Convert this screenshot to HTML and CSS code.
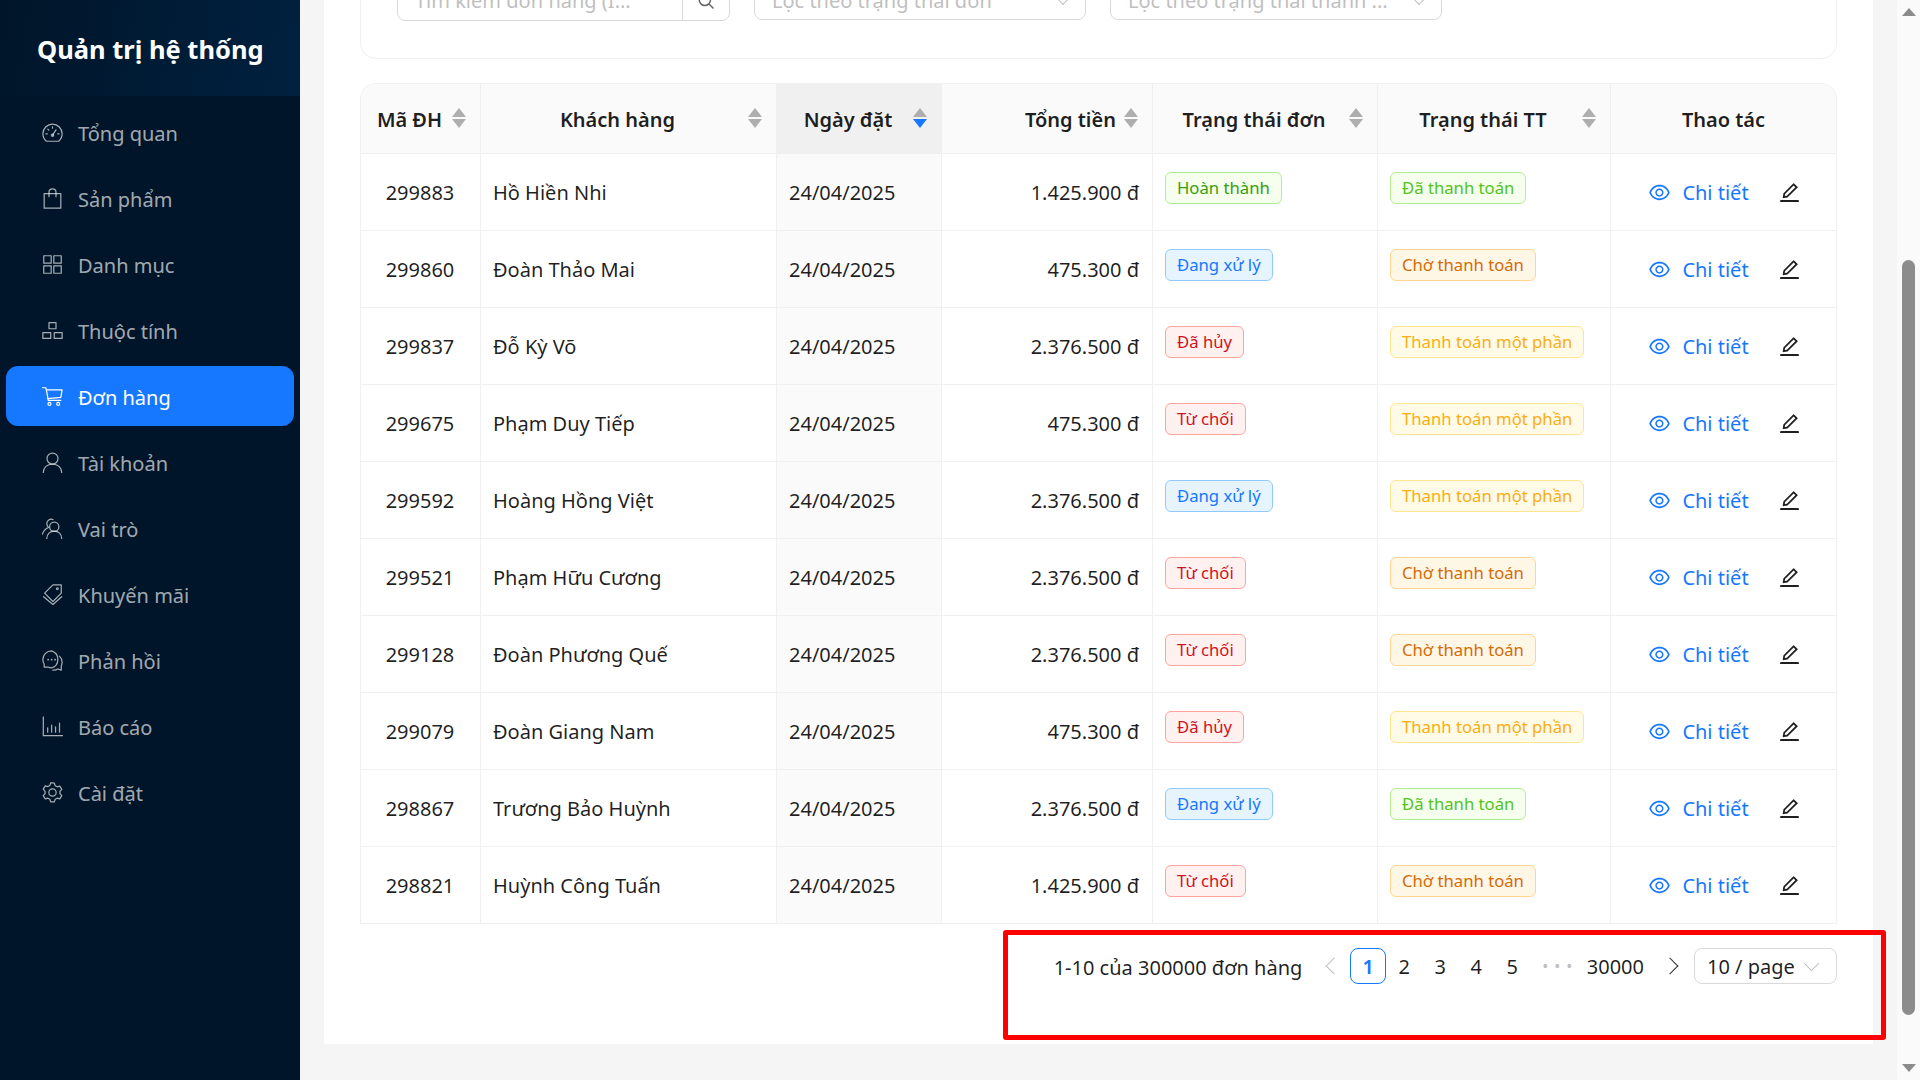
FILE: index.html
```html
<!DOCTYPE html>
<html lang="vi">
<head>
  <meta charset="UTF-8" />
  <title>Quản trị hệ thống - Đơn hàng</title>
  <link rel="stylesheet" href="styles.css">
</head>
<body>
  <svg class="sprite" xmlns="http://www.w3.org/2000/svg">
    <symbol id="i-eye" viewBox="64 64 896 896"><path fill="currentColor" d="M942.2 486.2C847.4 286.5 704.1 186 512 186c-192.2 0-335.4 100.5-430.2 300.3a60.3 60.3 0 0 0 0 51.5C176.6 737.5 319.9 838 512 838c192.2 0 335.4-100.5 430.2-300.3 7.7-16.2 7.7-35 0-51.5zM512 766c-161.3 0-279.4-81.8-362.7-254C232.6 339.8 350.7 258 512 258c161.3 0 279.4 81.8 362.7 254C791.5 684.2 673.4 766 512 766zm-4-430c-97.2 0-176 78.8-176 176s78.8 176 176 176 176-78.8 176-176-78.8-176-176-176zm0 288c-61.9 0-112-50.1-112-112s50.1-112 112-112 112 50.1 112 112-50.1 112-112 112z"/></symbol>
    <symbol id="i-edit" viewBox="64 64 896 896"><path fill="currentColor" d="M257.7 752c2 0 4-.2 6-.5L431.9 722c2-.4 3.9-1.3 5.3-2.8l423.9-423.9a9.96 9.96 0 0 0 0-14.1L694.9 114.9c-1.9-1.9-4.4-2.9-7.1-2.9s-5.2 1-7.1 2.9L256.8 538.8c-1.5 1.5-2.4 3.3-2.8 5.3l-29.5 168.2a33.5 33.5 0 0 0 9.4 29.8c6.6 6.4 14.9 9.9 23.8 9.9zm67.4-174.4L687.8 215l73.3 73.3-362.7 362.6-88.9 15.7 15.6-89zM880 836H144c-17.7 0-32 14.3-32 32v36c0 4.4 3.6 8 8 8h784c4.4 0 8-3.6 8-8v-36c0-17.7-14.3-32-32-32z"/></symbol>
    <symbol id="i-gauge" viewBox="0 0 24 24"><path d="M5 22h14c2.300-1.900 4-5 4-8.500a11 11 0 0 0-22 0c0 3.500 1.700 6.600 4 8.500z"/><path d="M12 15l4-6"/><circle cx="12" cy="15" r="1.300"/><path d="M12 5.500v1.500M4.500 13.500h1.500M19.500 13.500H18M6.800 8.300l1 1"/></symbol>
    <symbol id="i-bag" viewBox="0 0 24 24"><path d="M2.500 6.500h19V23h-19z"/><path d="M8 10V5a4 4 0 0 1 8 0v5"/></symbol>
    <symbol id="i-grid" viewBox="0 0 24 24"><path d="M2 2h8.500v8.500H2zM13.500 2H22v8.500h-8.500zM2 13.500h8.500V22H2zM13.500 13.500H22V22h-8.500z"/></symbol>
    <symbol id="i-cluster" viewBox="0 0 24 24"><path d="M8 3h8v7H8zM1 14.500h9V21H1zM14 14.500h9V21h-9z"/></symbol>
    <symbol id="i-cart" viewBox="0 0 24 24"><path d="M.5 2h4l2.700 14.500h14.300"/><path d="M5 4.500h18l-1.500 8.500-15 1.500"/><circle cx="8.500" cy="20.500" r="1.700"/><circle cx="18.500" cy="20.500" r="1.700"/></symbol>
    <symbol id="i-user" viewBox="0 0 24 24"><circle cx="12" cy="7.500" r="6.300"/><path d="M1.500 23.500c0-5.800 4.500-9.700 10.500-9.700s10.500 3.900 10.500 9.700"/></symbol>
    <symbol id="i-team" viewBox="0 0 24 24"><circle cx="14" cy="10" r="5.300"/><path d="M5.500 23.500c0-5.300 3.700-8.500 8.500-8.500s8.500 3.200 8.500 8.500"/><path d="M12.500 1.800a5 5 0 0 0-7 4.700c0 1.900 1 3.500 2 4.300-3.500 1.300-6 4-7 7.700"/></symbol>
    <symbol id="i-tags" viewBox="0 0 24 24"><path d="M12.500 1h9.500v9.500L12.500 20 3 10.500z"/><path d="M1.800 14.500l10.700 9 10-9"/><circle cx="17.500" cy="5.500" r="1"/></symbol>
    <symbol id="i-chat" viewBox="0 0 24 24"><path d="M11 1a10 10 0 0 0-10 10c0 1.800.5 3.500 1.500 5v3.500h4.200c1.300.6 2.800 1 4.300 1A10.250 10.250 0 0 0 11 1z"/><path d="M20 7c2 1.900 3 4.400 3 7 0 1.600-.4 3.100-1 4.500V23l-4-1.300c-1.500 1-3.500 1.500-5.500 1.300"/><path d="M7 11h.01M11 11h.01M15 11h.01" stroke-width="2"/></symbol>
    <symbol id="i-chart" viewBox="0 0 24 24"><path d="M1.500 1v21.500h22"/><path d="M6.500 18.500v-5M11 18.500v-8M15.500 18.500v-6M20 18.500V8"/></symbol>
    <symbol id="i-gear" viewBox="0 0 24 24"><path d="M12 1l2 .2 1 3 2.300 1.300 3-.8 2.300 3.700-2.100 2.300v2.600l2.100 2.300-2.300 3.700-3-.8-2.300 1.300-1 3h-4l-1-3-2.300-1.300-3 .8-2.300-3.700 2.100-2.300v-2.600L1.400 8.100l2.300-3.700 3 .8L9 3.900l1-3z"/><circle cx="12" cy="12" r="4.200"/></symbol>
  </svg>

  <aside class="sidebar">
    <div class="logo">Quản trị hệ thống</div>
    <nav class="menu">
      <a class="menu-item"><svg><use href="#i-gauge"/></svg>Tổng quan</a>
      <a class="menu-item"><svg><use href="#i-bag"/></svg>Sản phẩm</a>
      <a class="menu-item"><svg><use href="#i-grid"/></svg>Danh mục</a>
      <a class="menu-item"><svg><use href="#i-cluster"/></svg>Thuộc tính</a>
      <a class="menu-item active"><svg><use href="#i-cart"/></svg>Đơn hàng</a>
      <a class="menu-item"><svg><use href="#i-user"/></svg>Tài khoản</a>
      <a class="menu-item"><svg><use href="#i-team"/></svg>Vai trò</a>
      <a class="menu-item"><svg><use href="#i-tags"/></svg>Khuyến mãi</a>
      <a class="menu-item"><svg><use href="#i-chat"/></svg>Phản hồi</a>
      <a class="menu-item"><svg><use href="#i-chart"/></svg>Báo cáo</a>
      <a class="menu-item"><svg><use href="#i-gear"/></svg>Cài đặt</a>
    </nav>
  </aside>

  <main class="main">
    <div class="card">
      <div class="filters">
        <div class="search">
          <span class="search-text">Tìm kiếm đơn hàng (I...</span>
          <span class="search-btn">
            <svg viewBox="0 0 24 24"><circle cx="10.500" cy="10.500" r="7.500"/><path d="M16 16l6 6"/></svg>
          </span>
        </div>
        <div class="select"><span>Lọc theo trạng thái đơn</span><i class="chev"></i></div>
        <div class="select"><span>Lọc theo trạng thái thanh ...</span><i class="chev"></i></div>
      </div>

      <div class="table-wrap">
        <table class="orders">
          <colgroup>
            <col class="c-id"><col class="c-name"><col class="c-date"><col class="c-total"><col class="c-status"><col class="c-pay"><col class="c-act">
          </colgroup>
          <thead>
            <tr>
              <th><div class="th"><span class="th-title center">Mã ĐH</span><span class="sorter"></span></div></th>
              <th><div class="th"><span class="th-title center">Khách hàng</span><span class="sorter"></span></div></th>
              <th class="sorted"><div class="th"><span class="th-title center">Ngày đặt</span><span class="sorter desc"></span></div></th>
              <th><div class="th"><span class="th-title right">Tổng tiền</span><span class="sorter"></span></div></th>
              <th><div class="th"><span class="th-title center">Trạng thái đơn</span><span class="sorter"></span></div></th>
              <th><div class="th"><span class="th-title center">Trạng thái TT</span><span class="sorter"></span></div></th>
              <th class="plain">Thao tác</th>
            </tr>
          </thead>
          <tbody>
            <tr><td class="id">299883</td><td>Hồ Hiền Nhi</td><td class="sorted">24/04/2025</td><td class="total">1.425.900 đ</td><td class="tag-cell"><span class="tag green">Hoàn thành</span></td><td class="tag-cell"><span class="tag success">Đã thanh toán</span></td><td><div class="actions"><a class="detail"><svg><use href="#i-eye"/></svg>Chi tiết</a><svg class="edit"><use href="#i-edit"/></svg></div></td></tr>
            <tr><td class="id">299860</td><td>Đoàn Thảo Mai</td><td class="sorted">24/04/2025</td><td class="total">475.300 đ</td><td class="tag-cell"><span class="tag blue">Đang xử lý</span></td><td class="tag-cell"><span class="tag orange">Chờ thanh toán</span></td><td><div class="actions"><a class="detail"><svg><use href="#i-eye"/></svg>Chi tiết</a><svg class="edit"><use href="#i-edit"/></svg></div></td></tr>
            <tr><td class="id">299837</td><td>Đỗ Kỳ Võ</td><td class="sorted">24/04/2025</td><td class="total">2.376.500 đ</td><td class="tag-cell"><span class="tag red">Đã hủy</span></td><td class="tag-cell"><span class="tag gold">Thanh toán một phần</span></td><td><div class="actions"><a class="detail"><svg><use href="#i-eye"/></svg>Chi tiết</a><svg class="edit"><use href="#i-edit"/></svg></div></td></tr>
            <tr><td class="id">299675</td><td>Phạm Duy Tiếp</td><td class="sorted">24/04/2025</td><td class="total">475.300 đ</td><td class="tag-cell"><span class="tag red">Từ chối</span></td><td class="tag-cell"><span class="tag gold">Thanh toán một phần</span></td><td><div class="actions"><a class="detail"><svg><use href="#i-eye"/></svg>Chi tiết</a><svg class="edit"><use href="#i-edit"/></svg></div></td></tr>
            <tr><td class="id">299592</td><td>Hoàng Hồng Việt</td><td class="sorted">24/04/2025</td><td class="total">2.376.500 đ</td><td class="tag-cell"><span class="tag blue">Đang xử lý</span></td><td class="tag-cell"><span class="tag gold">Thanh toán một phần</span></td><td><div class="actions"><a class="detail"><svg><use href="#i-eye"/></svg>Chi tiết</a><svg class="edit"><use href="#i-edit"/></svg></div></td></tr>
            <tr><td class="id">299521</td><td>Phạm Hữu Cương</td><td class="sorted">24/04/2025</td><td class="total">2.376.500 đ</td><td class="tag-cell"><span class="tag red">Từ chối</span></td><td class="tag-cell"><span class="tag orange">Chờ thanh toán</span></td><td><div class="actions"><a class="detail"><svg><use href="#i-eye"/></svg>Chi tiết</a><svg class="edit"><use href="#i-edit"/></svg></div></td></tr>
            <tr><td class="id">299128</td><td>Đoàn Phương Quế</td><td class="sorted">24/04/2025</td><td class="total">2.376.500 đ</td><td class="tag-cell"><span class="tag red">Từ chối</span></td><td class="tag-cell"><span class="tag orange">Chờ thanh toán</span></td><td><div class="actions"><a class="detail"><svg><use href="#i-eye"/></svg>Chi tiết</a><svg class="edit"><use href="#i-edit"/></svg></div></td></tr>
            <tr><td class="id">299079</td><td>Đoàn Giang Nam</td><td class="sorted">24/04/2025</td><td class="total">475.300 đ</td><td class="tag-cell"><span class="tag red">Đã hủy</span></td><td class="tag-cell"><span class="tag gold">Thanh toán một phần</span></td><td><div class="actions"><a class="detail"><svg><use href="#i-eye"/></svg>Chi tiết</a><svg class="edit"><use href="#i-edit"/></svg></div></td></tr>
            <tr><td class="id">298867</td><td>Trương Bảo Huỳnh</td><td class="sorted">24/04/2025</td><td class="total">2.376.500 đ</td><td class="tag-cell"><span class="tag blue">Đang xử lý</span></td><td class="tag-cell"><span class="tag success">Đã thanh toán</span></td><td><div class="actions"><a class="detail"><svg><use href="#i-eye"/></svg>Chi tiết</a><svg class="edit"><use href="#i-edit"/></svg></div></td></tr>
            <tr><td class="id">298821</td><td>Huỳnh Công Tuấn</td><td class="sorted">24/04/2025</td><td class="total">1.425.900 đ</td><td class="tag-cell"><span class="tag red">Từ chối</span></td><td class="tag-cell"><span class="tag orange">Chờ thanh toán</span></td><td><div class="actions"><a class="detail"><svg><use href="#i-eye"/></svg>Chi tiết</a><svg class="edit"><use href="#i-edit"/></svg></div></td></tr>
          </tbody>
        </table>
      </div>

      <div class="pagination">
        <span class="page-total">1-10 của 300000 đơn hàng</span>
        <span class="page-nav disabled"><i class="arrow left"></i></span>
        <span class="page current">1</span>
        <span class="page">2</span>
        <span class="page">3</span>
        <span class="page">4</span>
        <span class="page">5</span>
        <span class="page-jump">•••</span>
        <span class="page wide">30000</span>
        <span class="page-nav"><i class="arrow right"></i></span>
        <div class="page-size"><span>10 / page</span><i class="chev"></i></div>
      </div>
    </div>
    <div class="highlight"></div>
  </main>

  <div class="scrollbar">
    <i class="scroll-up"></i>
    <div class="scroll-thumb"></div>
    <i class="scroll-down"></i>
  </div>
</body>
</html>
```

FILE: styles.css
```css
:root {
  --primary: #1677ff;
  --line: #f0f0f0;
  --text: rgba(0, 0, 0, 0.88);
}

* {
  box-sizing: border-box;
}

html, body {
  height: 100%;
}

body {
  margin: 0;
  display: flex;
  height: 1080px;
  overflow: hidden;
  font-family: "Noto Sans", "Open Sans", sans-serif;
  font-size: 20px;
  color: var(--text);
  background: #f5f5f5;
}

.sprite {
  display: none;
}

/* sidebar */
.sidebar {
  width: 300px;
  flex: none;
  background: #001529;
}

.logo {
  height: 96px;
  padding: 2px 0 0 37px;
  display: flex;
  align-items: center;
  color: #fff;
  font-size: 25.500px;
  font-weight: 700;
  background: linear-gradient(100deg, #001529, #002140);
}

.menu {
  padding: 6px 6px 0;
}

.menu-item {
  display: flex;
  align-items: center;
  gap: 15px;
  height: 60px;
  margin-bottom: 6px;
  padding: 2px 0 0 36px;
  border-radius: 12px;
  color: rgba(255, 255, 255, 0.65);
}

.menu-item svg {
  width: 21px;
  height: 21px;
  margin-top: -2px;
  fill: none;
  stroke: currentColor;
  stroke-width: 1.400;
  stroke-linecap: round;
  stroke-linejoin: round;
}

.menu-item.active {
  background: var(--primary);
  color: #fff;
}

/* main */
.main {
  position: relative;
  width: 1597px;
  flex: none;
  padding: 0 24px;
}

.card {
  margin-top: -60px;
  padding: 0 36px 60px;
  background: #fff;
}

.filters {
  height: 119px;
  margin-bottom: 24px;
  padding: 40px 36px 0;
  display: flex;
  gap: 24px;
  border: 1px solid var(--line);
  border-top: none;
  border-radius: 0 0 16px 16px;
  color: #bfbfbf;
}

.search, .select {
  height: 40px;
  display: flex;
  align-items: center;
  border: 1px solid #d9d9d9;
  border-radius: 8px;
}

.search {
  width: 333px;
  height: 41px;
}

.search-text {
  flex: 1;
  padding-left: 17px;
}

.search-btn {
  width: 47px;
  height: 100%;
  display: flex;
  align-items: center;
  justify-content: center;
  border-left: 1px solid #d9d9d9;
}

.search-btn svg {
  width: 18px;
  height: 18px;
  fill: none;
  stroke: #666;
  stroke-width: 2;
}

.select {
  width: 332px;
  padding: 0 17px;
  justify-content: space-between;
}

.chev {
  width: 10px;
  height: 10px;
  margin-top: -5px;
  border-right: 1px solid #bfbfbf;
  border-bottom: 1px solid #bfbfbf;
  transform: rotate(45deg);
}

/* table */
.table-wrap {
  border: 1px solid var(--line);
  border-bottom: none;
  border-radius: 16px 16px 0 0;
  overflow: hidden;
}

.orders {
  width: 100%;
  table-layout: fixed;
  border-collapse: separate;
  border-spacing: 0;
}

.c-id { width: 120px; }
.c-name { width: 296px; }
.c-date { width: 165px; }
.c-total { width: 211px; }
.c-status { width: 225px; }
.c-pay { width: 233px; }

th {
  height: 70px;
  padding: 2px 0 0;
  background: #fafafa;
  border-right: 1px solid var(--line);
  border-bottom: 1px solid var(--line);
  font-weight: 600;
}

th:last-child, td:last-child {
  border-right: none;
}

th.sorted {
  background: #f0f0f0;
}

.th {
  display: flex;
  align-items: center;
  gap: 8px;
  padding: 0 14px;
}

.th-title {
  flex: 1;
}

.th-title.center { text-align: center; }
.th-title.right { text-align: right; }

.sorter {
  position: relative;
  width: 14px;
  height: 20px;
  flex: none;
  margin-top: -4px;
}

.sorter::before, .sorter::after {
  content: "";
  position: absolute;
  left: 0;
  border-left: 7px solid transparent;
  border-right: 7px solid transparent;
}

.sorter::before {
  top: 0;
  border-bottom: 9px solid #aeaeae;
}

.sorter::after {
  bottom: 0;
  border-top: 9px solid #aeaeae;
}

.sorter.desc::after {
  border-top-color: var(--primary);
}

td {
  height: 77px;
  padding: 0 13px 0 12px;
  border-right: 1px solid var(--line);
  border-bottom: 1px solid var(--line);
  white-space: nowrap;
}

td.sorted {
  background: #fafafa;
}

td.id {
  text-align: center;
}

td.total {
  text-align: right;
}

td.tag-cell {
  vertical-align: top;
  padding-top: 18px;
}

.tag {
  display: inline-block;
  height: 32px;
  padding: 0 11px;
  line-height: 30px;
  font-size: 16.700px;
  border: 1px solid;
  border-radius: 6px;
}

.green { color: #389e0d; background: #f6ffed; border-color: #b7eb8f; }
.success { color: #52c41a; background: #f6ffed; border-color: #b7eb8f; }
.blue { color: #1677ff; background: #e6f4ff; border-color: #91caff; }
.red { color: #cf1322; background: #fff1f0; border-color: #ffa39e; }
.orange { color: #d46b08; background: #fff7e6; border-color: #ffd591; }
.gold { color: #faad14; background: #fffbe6; border-color: #ffe58f; }

.actions {
  display: flex;
  align-items: center;
  justify-content: center;
  gap: 30px;
  padding-left: 3px;
}

.detail {
  display: flex;
  align-items: center;
  gap: 12px;
  color: var(--primary);
}

.detail svg, .edit {
  width: 21px;
  height: 21px;
}

/* pagination */
.pagination {
  margin-top: 24px;
  display: flex;
  align-items: center;
  justify-content: flex-end;
  height: 36px;
}

.page-total {
  margin-right: 12px;
  padding-top: 2px;
}

.page, .page-nav {
  min-width: 36px;
  height: 36px;
  display: flex;
  align-items: center;
  justify-content: center;
}

.page.current {
  color: var(--primary);
  font-weight: 600;
  border: 1px solid var(--primary);
  border-radius: 8px;
}

.page.wide {
  padding: 0 11px 0 8.500px;
}

.page-jump {
  width: 36px;
  flex: none;
  margin: 0 6px;
  text-align: center;
  white-space: nowrap;
  color: #bfbfbf;
  font-size: 16px;
  letter-spacing: 6px;
  text-indent: 6px;
}

.arrow {
  width: 12px;
  height: 12px;
  border-left: 1.500px solid #333;
  border-bottom: 1.500px solid #333;
}

.arrow.left {
  margin-left: 4px;
  transform: rotate(45deg);
}

.arrow.right {
  margin-right: 6px;
  transform: rotate(225deg);
}

.disabled .arrow {
  border-color: #bfbfbf;
}

.page-size {
  width: 143px;
  height: 36px;
  margin-left: 3px;
  padding: 0 19px 0 12px;
  display: flex;
  align-items: center;
  justify-content: space-between;
  border: 1px solid #d9d9d9;
  border-radius: 8px;
}

.page-size .chev {
  width: 11px;
  height: 11px;
  margin-top: -6px;
}

/* red marker over the pager */
.highlight {
  position: absolute;
  left: 703px;
  top: 930px;
  width: 883px;
  height: 110px;
  border: 5px solid #f00;
  border-radius: 3px;
}

/* scrollbar */
.scrollbar {
  width: 23px;
  flex: none;
  padding-top: 8px;
  display: flex;
  flex-direction: column;
  align-items: center;
  background: #fafafa;
}

.scrollbar i {
  width: 0;
  height: 0;
  border-left: 7.500px solid transparent;
  border-right: 7.500px solid transparent;
}

.scroll-up {
  border-bottom: 8px solid #8c8c8c;
}

.scroll-down {
  margin-top: 49px;
  border-top: 8px solid #8c8c8c;
}

.scroll-thumb {
  width: 13px;
  height: 755px;
  margin-top: 244px;
  background: #8c8c8c;
  border-radius: 7px;
}
```
